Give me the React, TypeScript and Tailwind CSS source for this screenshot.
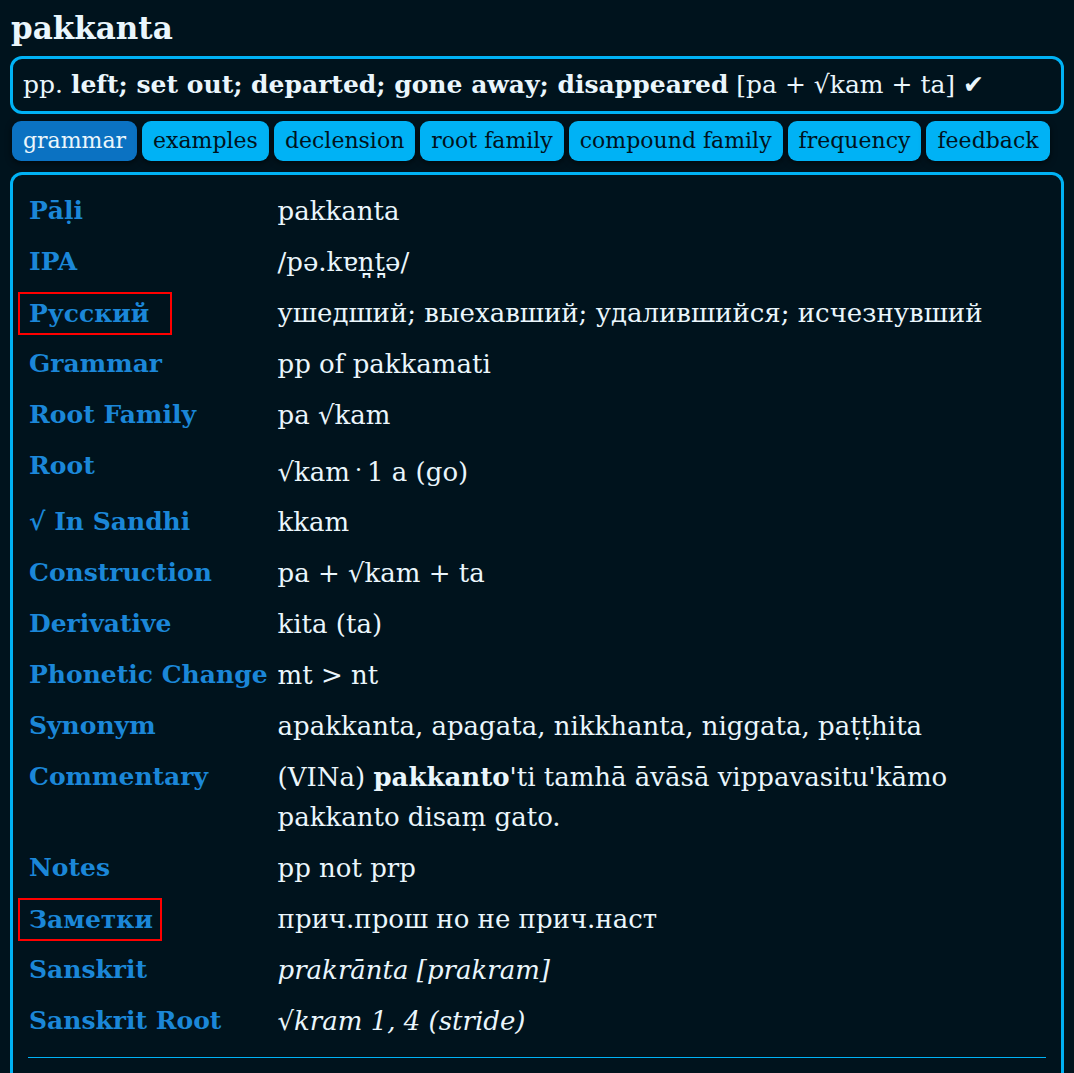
import type { ReactNode } from "react";

const tabs = [
  "grammar",
  "examples",
  "declension",
  "root family",
  "compound family",
  "frequency",
  "feedback",
];

type Row = { label: string; value: ReactNode; mark?: string; lower?: boolean };

const rows: Row[] = [
  { label: "Pāḷi", value: "pakkanta" },
  { label: "IPA", value: "/pə.kɐn̪t̪ə/" },
  { label: "Русский", value: "ушедший; выехавший; удалившийся; исчезнувший", mark: "w-[154px]" },
  { label: "Grammar", value: "pp of pakkamati" },
  { label: "Root Family", value: "pa √kam" },
  {
    label: "Root",
    lower: true,
    value: (
      <>
        √kam<span className="relative top-[7px] px-[2px]">˙</span>1 a (go)
      </>
    ),
  },
  { label: "√ In Sandhi", value: "kkam" },
  { label: "Construction", value: "pa + √kam + ta" },
  { label: "Derivative", value: "kita (ta)" },
  { label: "Phonetic Change", value: "mt > nt" },
  { label: "Synonym", value: "apakkanta, apagata, nikkhanta, niggata, paṭṭhita" },
  {
    label: "Commentary",
    value: (
      <>
        (VINa) <b>pakkanto</b>'ti tamhā āvāsā vippavasitu'kāmo pakkanto disaṃ gato.
      </>
    ),
  },
  { label: "Notes", value: "pp not prp" },
  { label: "Заметки", value: "прич.прош но не прич.наст", mark: "w-[144px]" },
  { label: "Sanskrit", value: <i>prakrānta [prakram]</i> },
  { label: "Sanskrit Root", value: <i>√kram 1, 4 (stride)</i> },
];

export default function App() {
  return (
    <div className="h-[1073px] overflow-hidden bg-[#00131d] px-[10px] pt-[6px] text-[#eaf6fc] font-['DejaVu_Serif',serif]">
      <h1 className="text-[31px] font-bold leading-[44px] pl-px">pakkanta</h1>
      <div className="mt-[6px] rounded-[12px] border-[3px] border-[#00b2f5] px-[10px] h-[58px] flex items-center text-[25px]">
        <span>
          pp. <b>left; set out; departed; gone away; disappeared</b> [pa + √kam + ta] ✔
        </span>
      </div>
      <div className="mt-[7px] flex gap-[5px] pl-[2px]">
        {tabs.map((t, i) => (
          <button
            key={t}
            className={`h-[40px] rounded-[9px] px-[11px] text-[22px] leading-none shadow-[0_2px_6px_rgba(0,0,0,0.6)] ${
              i === 0 ? "bg-[#0b72c2] text-[#eaf6fc]" : "bg-[#00b2f5] text-[#00131d]"
            }`}
          >
            {t}
          </button>
        ))}
      </div>
      <div className="mt-[11px] rounded-t-[12px] border-[3px] border-b-0 border-[#00b2f5] px-[13px] pt-[5px] pb-[40px]">
        <table className="border-separate border-spacing-y-[11px]">
          <tbody>
            {rows.map((r) => (
              <tr key={r.label}>
                <td className="align-top pl-[3px] pr-[10px] whitespace-nowrap text-[25px] leading-[40px] font-bold text-[#1b87d8]">
                  {r.mark ? (
                    <span
                      className={`inline-block align-top ${r.mark} h-[43px] -mt-[1.5px] -mb-[2px] -ml-[11px] pl-[9px] border-2 border-[#ff0000] leading-[39px]`}
                    >
                      {r.label}
                    </span>
                  ) : (
                    r.label
                  )}
                </td>
                <td className="align-top text-[26px] leading-[40px]">
                  {r.lower ? (
                    <div className="pt-[8px] leading-[37px]">{r.value}</div>
                  ) : (
                    r.value
                  )}
                </td>
              </tr>
            ))}
          </tbody>
        </table>
        <div className="mt-[5px] h-px bg-[#00b2f5] mx-[2px]" />
      </div>
    </div>
  );
}
